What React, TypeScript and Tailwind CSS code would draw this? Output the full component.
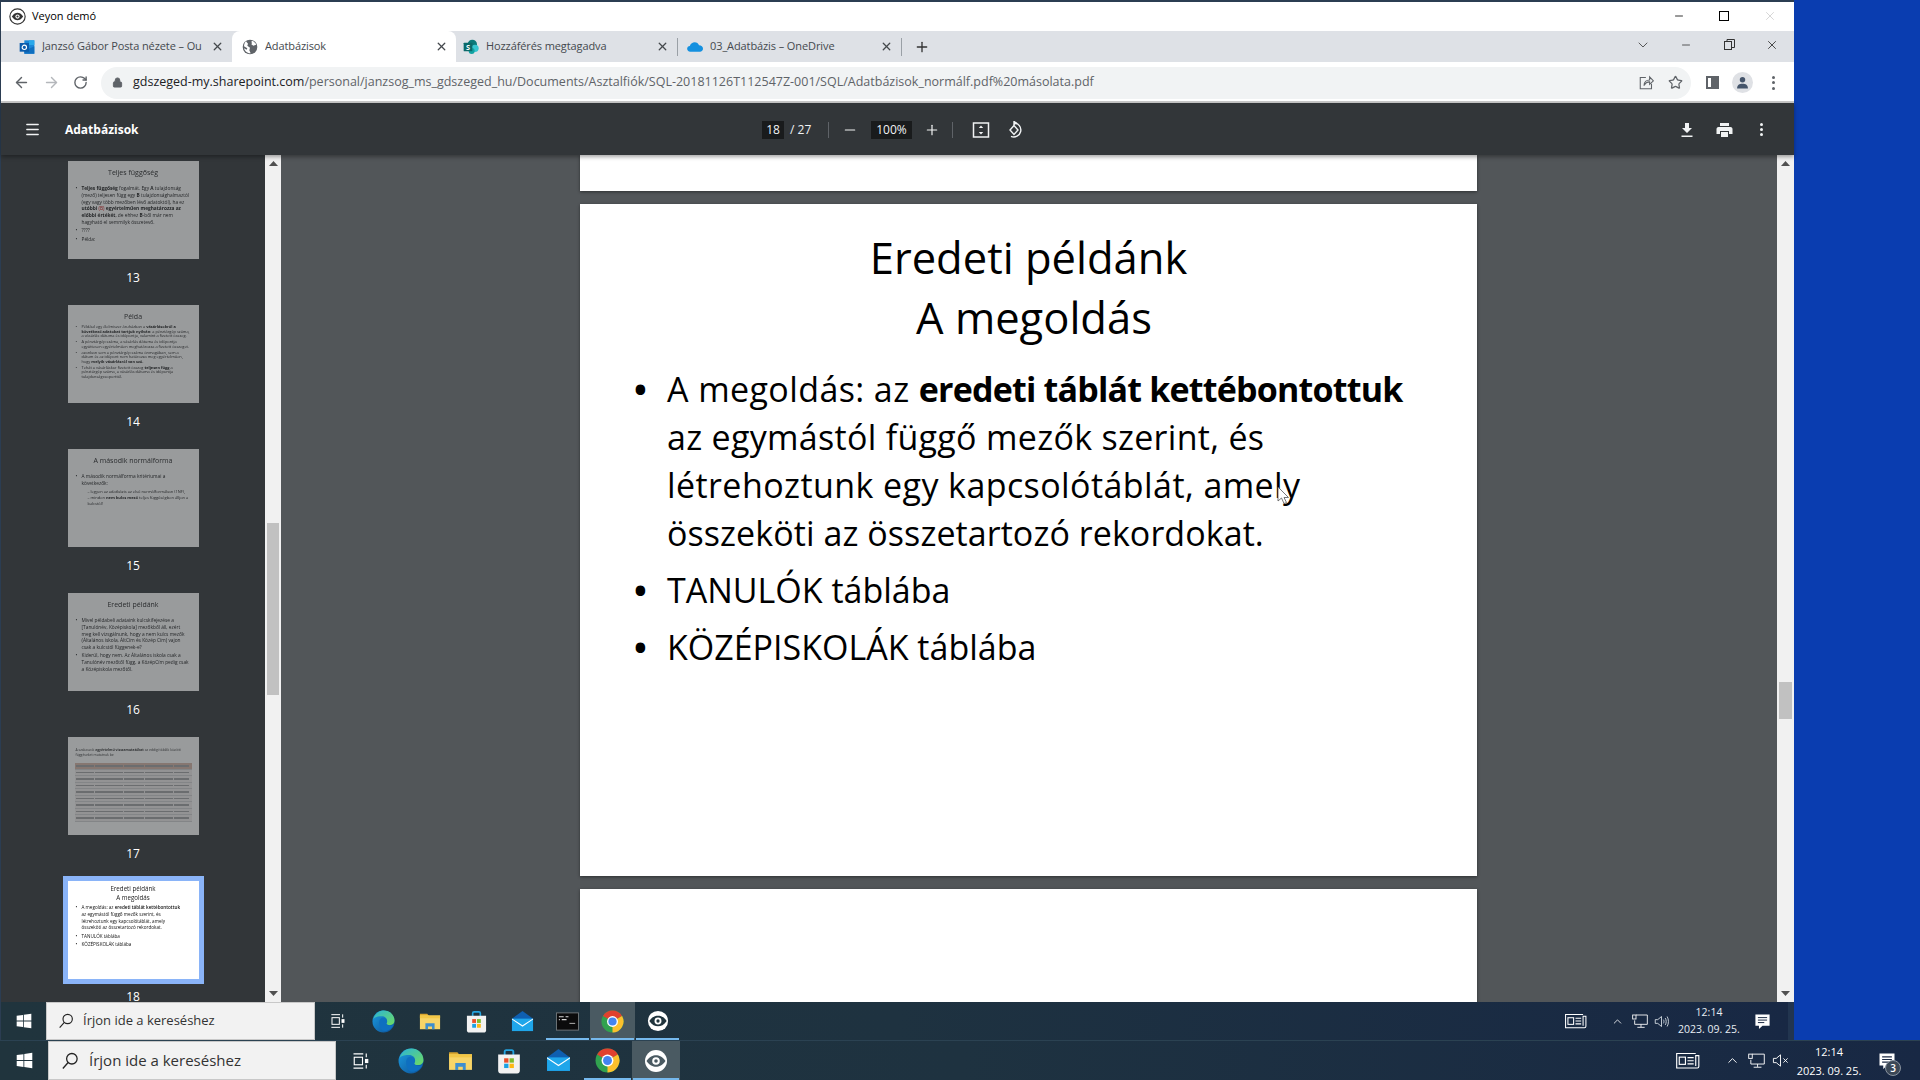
import React from "react";
import { ArrowLeft, ArrowRight, RotateCw, Star, X, Plus, Minus, ChevronDown, ChevronUp, Menu, Lock } from "lucide-react";

const Veyon = ({ s = 24, fg = "#fff", bg = "#1f3440" }: { s?: number; fg?: string; bg?: string }) => (
  <svg width={s} height={s} viewBox="0 0 24 24">
    <circle cx="12" cy="12" r="11" fill={fg} />
    <path d="M2.500 12c3-4.400 6.300-5.800 9.500-5.800s6.500 1.400 9.500 5.800c-3 4.400-6.300 5.800-9.500 5.800S5.500 16.400 2.500 12z" fill={bg} />
    <circle cx="12" cy="12" r="3.800" fill={fg} />
    <circle cx="12" cy="12" r="1.800" fill={bg} />
  </svg>
);
const VeyonSmall = () => (
  <svg width="17" height="17" viewBox="0 0 24 24">
    <circle cx="12" cy="12" r="10.800" fill="#fff" stroke="#333" strokeWidth="1.600" />
    <path d="M4 12c2.600-4 5.400-5.400 8-5.400s5.400 1.400 8 5.400c-2.600 4-5.400 5.400-8 5.400S6.600 16 4 12z" fill="#333" />
    <circle cx="12" cy="12" r="3" fill="#fff" />
    <circle cx="12" cy="12" r="1.500" fill="#333" />
  </svg>
);
const WinLogo = ({ s }: { s: number }) => (
  <svg width={s} height={s} viewBox="0 0 24 24" fill="#fff">
    <path d="M1 4.300 10.500 3v8.400H1zM11.700 2.800 23 1.200v10.200H11.700zM1 12.600h9.500V21L1 19.700zM11.700 12.600H23v10.200l-11.300-1.600z" />
  </svg>
);
const SearchGlass = ({ s }: { s: number }) => (
  <svg width={s} height={s} viewBox="0 0 24 24" fill="none" stroke="#222" strokeWidth="1.700">
    <circle cx="14.500" cy="9" r="7" />
    <path d="M9.500 14 2.500 22" />
  </svg>
);
const TaskView = ({ s }: { s: number }) => (
  <svg width={s} height={s} viewBox="0 0 24 24" fill="none" stroke="#fff" strokeWidth="1.500">
    <path d="M2 2.500h13M2 21.500h13" />
    <rect x="3" y="7" width="11" height="10" />
    <path d="M19 2v5M19 17v5" />
    <rect x="18" y="10" width="3" height="4" fill="#fff" />
  </svg>
);
const Edge = ({ s }: { s: number }) => (
  <svg width={s} height={s} viewBox="0 0 24 24">
    <defs>
      <linearGradient id="edgeA" x1="0" y1="0" x2="1" y2="1">
        <stop offset="0" stopColor="#1b9de2" />
        <stop offset="1" stopColor="#0c4f96" />
      </linearGradient>
      <linearGradient id="edgeB" x1="0" y1="0" x2="1" y2="1">
        <stop offset="0" stopColor="#2bb3d8" />
        <stop offset="1" stopColor="#6fdc5f" />
      </linearGradient>
    </defs>
    <circle cx="12" cy="12" r="11.500" fill="url(#edgeA)" />
    <path d="M1.500 9C3.500 3.500 7.500.5 12.500.5c6 0 11 4.500 11 10.500 0 3-2.200 4.800-5 4.800-2 0-3.700-.7-3.700-1.600 0-.6 1-1 1-2.700 0-2.800-2.400-5-5.300-5-3.400 0-7 .5-9 2.500z" fill="url(#edgeB)" />
    <path d="M7.500 13c0-3 2-5 3.800-5 2.400 0 4.500 1.800 4.500 4 0 1-.7 1.500-.7 2.200 0 1.500 2.200 2.300 4.300 2.300 1 0 2-.2 3-.8-1.600 4-5.800 6.500-9.500 6.300-3.500-.2-5.400-5-5.400-9z" fill="#0e6fc0" />
  </svg>
);
const Explorer = ({ s }: { s: number }) => (
  <svg width={s} height={s} viewBox="0 0 24 24">
    <path d="M1 4h8l2 2.500H1z" fill="#d9a52e" />
    <rect x="1" y="6" width="22" height="15" fill="#f8d568" />
    <path d="M1 6h22v3H1z" fill="#f3c746" />
    <path d="M7 21v-6.500h10V21h-2.800v-3H9.800v3z" fill="#3f8fce" />
  </svg>
);
const Store = ({ s }: { s: number }) => (
  <svg width={s} height={s} viewBox="0 0 24 24">
    <path d="M8 7V3.500C8 2.500 8.800 2 9.500 2h5c.8 0 1.500.5 1.500 1.500V7" fill="none" stroke="#25a4e0" strokeWidth="1.700" />
    <path d="M2 6h20v15c0 1.500-1 2.500-2.500 2.500h-15C3 23.500 2 22.500 2 21z" fill="#f2f2f2" />
    <rect x="7.500" y="9.500" width="4" height="4" fill="#ea4f2a" />
    <rect x="12.500" y="9.500" width="4" height="4" fill="#7cbb2b" />
    <rect x="7.500" y="14.500" width="4" height="4" fill="#1ba2e4" />
    <rect x="12.500" y="14.500" width="4" height="4" fill="#fdb813" />
  </svg>
);
const Mail = ({ s }: { s: number }) => (
  <svg width={s} height={s} viewBox="0 0 24 24">
    <path d="M12 1 23 9v13H1V9z" fill="#0f5fb0" />
    <path d="M1 9h22v13H1z" fill="#1fa6ea" />
    <path d="M1 10l11 7.500L23 10V8.800L12 16 1 8.800z" fill="#fff" />
  </svg>
);
const Cmd = ({ s }: { s: number }) => (
  <svg width={s} height={s} viewBox="0 0 24 24">
    <rect x="0.500" y="3" width="23" height="18" fill="#0b0b0c" stroke="#6f7579" />
    <path d="M3 7h5M10 7h3M3 10h1M6 10h5" stroke="#d8d8d8" strokeWidth="1.200" />
    <path d="M14 14h6" stroke="#999" strokeWidth="1.200" />
  </svg>
);
const Chrome = ({ s }: { s: number }) => (
  <svg width={s} height={s} viewBox="0 0 24 24">
    <circle cx="12" cy="12" r="11.500" fill="#31a24f" />
    <path d="M12 12 2.040 6.250A11.500 11.500 0 0 1 21.960 6.250z" fill="#e0412f" />
    <path d="M12 12 21.960 6.250A11.500 11.500 0 0 1 12 23.500z" fill="#fbc02d" />
    <circle cx="12" cy="12" r="5.700" fill="#fff" />
    <circle cx="12" cy="12" r="4.300" fill="#4484f0" />
  </svg>
);
const News = ({ s }: { s: number }) => (
  <svg width={s} height={s * 0.7} viewBox="0 0 24 17" fill="none" stroke="#fff" strokeWidth="1.100">
    <path d="M20 1.500H1.500v14H21.500c1 0 1.500-.6 1.500-1.500V3.500H20v10" />
    <rect x="4" y="5" width="6" height="7" />
    <path d="M12 5.500h6M12 8.500h6M12 11.500h6" />
  </svg>
);
const NetIcon = ({ s }: { s: number }) => (
  <svg width={s} height={s} viewBox="0 0 24 24" fill="none" stroke="#fff" strokeWidth="1.300">
    <path d="M6 3h17v14H4v-6" />
    <rect x="1" y="3" width="5" height="6" />
    <path d="M13.500 17v4M8 21.500h11" />
  </svg>
);
const VolOn = ({ s }: { s: number }) => (
  <svg width={s} height={s} viewBox="0 0 24 24" fill="none" stroke="#e8eef3" strokeWidth="1.300">
    <path d="M2 9v6h4l6 5V4L6 9z" />
    <path d="M15 9c1.200 1.800 1.200 4.200 0 6M18 6.500c2 3.200 2 7.800 0 11M21 4c2.800 4.700 2.800 11.300 0 16" />
  </svg>
);
const VolMute = ({ s }: { s: number }) => (
  <svg width={s} height={s} viewBox="0 0 24 24" fill="none" stroke="#fff" strokeWidth="1.300">
    <path d="M2 9v6h4l6 5V4L6 9z" />
    <path d="M16 9l6 6M22 9l-6 6" />
  </svg>
);
const Note = ({ s }: { s: number }) => (
  <svg width={s} height={s} viewBox="0 0 24 24">
    <path d="M2 2h20v16H12l-5 4.500V18H2z" fill="#fff" />
    <path d="M5.500 6.500h13M5.500 10h13M5.500 13.500h9" stroke="#1c2a44" strokeWidth="1.400" />
  </svg>
);

const Outlook = () => (
  <svg width="16" height="16" viewBox="0 0 24 24">
    <rect x="8" y="2" width="15" height="20" fill="#1a88d8" />
    <rect x="15" y="2" width="8" height="7" fill="#29a8ea" />
    <path d="M23 11v11H8v-4z" fill="#0f6fc0" />
    <rect x="1" y="6" width="14" height="13" fill="#0b5cab" />
    <circle cx="8" cy="12.500" r="3.300" fill="none" stroke="#fff" strokeWidth="1.700" />
  </svg>
);
const Globe = () => (
  <svg width="16" height="16" viewBox="0 0 24 24">
    <circle cx="12" cy="12" r="11" fill="#5f6368" />
    <path d="M6 3.500 9 7l-1 3 4 3-1 4 2 4.500C8 22 4 18 3 14l4 2 1-2-5-3c.2-3 1-6 3-7.500zM15 2.500c3 1 5.500 3.500 6.300 6L17 10l-3-2 1-2-1-1.500z" fill="#fff" />
  </svg>
);
const SharePoint = () => (
  <svg width="16" height="16" viewBox="0 0 24 24">
    <circle cx="14" cy="8" r="7" fill="#0b7a7a" />
    <circle cx="18" cy="14" r="5.500" fill="#37c6d0" />
    <circle cx="13" cy="18" r="4.500" fill="#13a3a3" />
    <rect x="1" y="5.500" width="13" height="13" rx="1" fill="#0b6a6a" />
    <text x="7.500" y="16" textAnchor="middle" fontSize="11" fontWeight="700" fill="#fff" fontFamily="Open Sans">S</text>
  </svg>
);
const OneDrive = () => (
  <svg width="16" height="16" viewBox="0 0 24 16">
    <path d="M5 15c-3 0-4.800-2-4.800-4.300 0-2.300 1.800-4 4-4.200C5.500 3 8.500 1 11.500 1c3.200 0 5.500 2 6.500 4.500 3.500 0 6 2.300 6 5.200 0 2.500-2 4.300-4.500 4.300z" fill="#1490df" />
  </svg>
);

const Tab = ({ icon, title, w, active, sep }: { icon: React.ReactNode; title: string; w: string; active?: boolean; sep?: boolean }) => (
  <div className={`${w} h-[31px] flex items-center relative shrink-0 ${active ? "bg-white rounded-t-[8px] text-[#3c4043]" : "text-[#45494e]"}`}>
    <span className="w-[23px] shrink-0 flex">{icon}</span>
    <span className="whitespace-nowrap text-[11px] tracking-[-0.1px] overflow-hidden flex-1">{title}</span>
    <X className="w-[13px] h-[13px] mx-[8px] shrink-0 text-[#44484c]" strokeWidth={2.4} />
    {sep && <span className="w-px h-[18px] bg-[#9aa0a6] shrink-0" />}
  </div>
);

const Slot = ({ w, active, running, children }: { w: string; active?: boolean; running?: boolean; children: React.ReactNode }) => (
  <div className={`${w} h-full flex items-center justify-center relative shrink-0 ${active ? "bg-[#4a5a62]" : ""}`}>
    {children}
    {running && <span className="absolute bottom-0 left-[1px] right-[1px] h-[2px] bg-[#76b9ed]" />}
  </div>
);

const Thumb = ({ n, children, current }: { n: number; children: React.ReactNode; current?: boolean }) => (
  <div className="h-[144px] shrink-0 flex flex-col items-center">
    <div className={`w-[131px] h-[98px] shrink-0 bg-white overflow-hidden text-[#111] ${current ? "outline-[5px] outline-[#8ab4f8]" : "opacity-50"}`}>
      <div className="blur-[0.4px] px-[8px] pt-[4px]">{children}</div>
    </div>
    <div className={`text-[12px] leading-[16px] text-white ${current ? "mt-[10px]" : "mt-[11px]"}`}>{n}</div>
  </div>
);
const TT = ({ children, wide }: { children: React.ReactNode; wide?: boolean }) => (
  <div className={`text-[7px] leading-[9px] text-center pt-[3px] text-[#222] ${wide ? "mb-[8px]" : "mb-[4px]"}`}>{children}</div>
);
const BL = ({ children, cls = "text-[4.400px] leading-[6px]" }: { children: React.ReactNode; cls?: string }) => (
  <div className={`flex ${cls} mb-[1.500px]`}>
    <span className="w-[6px] shrink-0">•</span>
    <span>{children}</span>
  </div>
);

const rows = [0, 1, 2, 3, 4, 5, 6, 7, 8];
const cols = ["w-[18px]", "w-[28px]", "w-[20px]", "w-[28px]", "w-[15px]"];

const ScrollArrow = ({ up }: { up?: boolean }) => (
  <svg width="9" height="5" viewBox="0 0 9 5" fill="#505050">
    {up ? <path d="M4.500 0 9 5H0z" /> : <path d="M4.500 5 9 0H0z" />}
  </svg>
);

const Bullet = ({ children, last }: { children: React.ReactNode; last?: boolean }) => (
  <div className={`flex whitespace-nowrap ${last ? "" : "mb-[9px]"}`}>
    <span className="w-[33px] shrink-0 font-bold">•</span>
    <div>{children}</div>
  </div>
);

export default function App() {
  return (
    <div className="w-[1920px] h-[1080px] overflow-hidden flex flex-col bg-[#0a3db0] [font-family:'Open_Sans','Noto_Sans',sans-serif]">
      <div className="flex h-[1040px] shrink-0">
        <div className="w-[1794px] h-full flex flex-col shrink-0 border-t-2 border-l border-[#2b3d52] bg-white">
          {/* title bar */}
          <div className="h-[29px] shrink-0 flex items-center bg-white">
            <span className="ml-[8px] mr-[6px] flex"><VeyonSmall /></span>
            <span className="text-[11px] text-black">Veyon demó</span>
            <div className="ml-auto flex items-center text-black mb-[2px]">
              <Minus className="w-[12px] h-[12px] mr-[34px]" strokeWidth={1.6} />
              <span className="w-[10px] h-[10px] border border-black mr-[34px]" />
              <X className="w-[14px] h-[14px] mr-[17px] text-[#c4c4c4]" strokeWidth={1.2} />
            </div>
          </div>
          {/* tabs */}
          <div className="h-[31px] shrink-0 flex items-center bg-[#dee1e6] pr-[16px]">
            <div className="w-[18px] shrink-0" />
            <Tab icon={<Outlook />} title="Janzsó Gábor Posta nézete – Ou" w="w-[213px]" />
            <div className="w-[224px] shrink-0 bg-white rounded-t-[8px] pl-[10px]">
              <Tab icon={<Globe />} title="Adatbázisok" w="w-[214px]" />
            </div>
            <div className="w-[7px] shrink-0" />
            <Tab icon={<SharePoint />} title="Hozzáférés megtagadva" w="w-[215px]" sep />
            <div className="w-[9px] shrink-0" />
            <Tab icon={<OneDrive />} title="03_Adatbázis – OneDrive" w="w-[215px]" sep />
            <Plus className="ml-[12px] w-[16px] h-[16px] text-[#333]" strokeWidth={2} />
            <div className="ml-auto flex items-center text-[#333] mb-[4px]">
              <ChevronDown className="w-[16px] h-[16px] mr-[29px]" strokeWidth={1.2} />
              <Minus className="w-[12px] h-[12px] mr-[32px]" strokeWidth={1.6} />
              <svg width="11" height="11" viewBox="0 0 11 11" fill="none" stroke="#333" className="mr-[30px]">
                <rect x="0.500" y="2.500" width="7" height="8" />
                <path d="M3 2.500V.5h7.500v8H8" />
              </svg>
              <X className="w-[14px] h-[14px] mr-[-1px]" strokeWidth={1.5} />
            </div>
          </div>
          {/* address bar */}
          <div className="h-[41px] shrink-0 flex items-center bg-white border-b-2 border-[#c9c9c9] text-[#5f6368] pt-[2px]">
            <ArrowLeft className="ml-[12px] w-[17px] h-[17px] text-[#5f6368]" strokeWidth={2} />
            <ArrowRight className="ml-[13px] w-[17px] h-[17px] text-[#b4b7bb]" strokeWidth={2} />
            <RotateCw className="ml-[13px] w-[15px] h-[15px] text-[#5f6368]" strokeWidth={2.2} />
            <div className="ml-[13px] w-[1590px] h-[32px] rounded-full bg-[#f1f3f4] flex items-center pl-[11px] shrink-0">
              <Lock className="w-[11px] h-[11px] text-[#5f6368] fill-[#5f6368]" strokeWidth={2} />
              <span className="ml-[10px] text-[12.500px] whitespace-nowrap text-[#5f6368]">
                <span className="text-[#202124]">gdszeged-my.sharepoint.com</span>/personal/janzsog_ms_gdszeged_hu/Documents/Asztalfiók/SQL-20181126T112547Z-001/SQL/Adatbázisok_normálf.pdf%20másolata.pdf
              </span>
              <div className="ml-auto flex items-center">
                <svg width="15" height="15" viewBox="0 0 24 24" fill="none" stroke="#5f6368" strokeWidth="1.700" className="mr-[14px]">
                  <path d="M11 4H2v18h18v-8" />
                  <path d="M8 17c0-6 4-9 9-9V3l6 6.500L17 15v-4c-4 0-7 2-9 6z" />
                </svg>
                <Star className="w-[15px] h-[15px] mr-[8px] text-[#5f6368]" strokeWidth={2} />
              </div>
            </div>
            <div className="ml-[15px] w-[13px] h-[13px] border-[2px] border-[#5f6368] flex justify-end shrink-0">
              <span className="w-[6px] bg-[#5f6368]" />
            </div>
            <div className="ml-[13px] w-[21px] h-[21px] rounded-full bg-[#dfe1e5] flex items-center justify-center shrink-0">
              <svg width="13" height="13" viewBox="0 0 24 24" fill="#44546a">
                <circle cx="12" cy="7" r="5" />
                <path d="M2 23c0-6 4-8.500 10-8.500S22 17 22 23z" />
              </svg>
            </div>
            <div className="ml-[19px] flex flex-col gap-[2.500px] shrink-0">
              <span className="w-[3px] h-[3px] rounded-full bg-[#5f6368]" />
              <span className="w-[3px] h-[3px] rounded-full bg-[#5f6368]" />
              <span className="w-[3px] h-[3px] rounded-full bg-[#5f6368]" />
            </div>
          </div>
          {/* pdf toolbar */}
          <div className="h-[52px] shrink-0 flex items-center bg-[#323639] text-[#f1f3f4] relative z-10 shadow-[0_2px_4px_rgba(0,0,0,0.35)] pt-[1px]">
            <Menu className="ml-[23px] w-[17px] h-[17px]" strokeWidth={2} />
            <span className="ml-[24px] text-[12px] font-bold text-white w-[697px] shrink-0">Adatbázisok</span>
            <span className="w-[22px] h-[18px] bg-[#191b1c] text-[12px] leading-[18px] text-center shrink-0">18</span>
            <span className="ml-[6px] text-[12px] w-[38px] shrink-0">/ 27</span>
            <span className="w-px h-[16px] bg-[#5f6368] shrink-0" />
            <Minus className="ml-[13px] w-[16px] h-[16px] shrink-0" strokeWidth={1.800} />
            <span className="ml-[13px] w-[41px] h-[18px] bg-[#191b1c] text-[12px] leading-[18px] text-center shrink-0">100%</span>
            <Plus className="ml-[12px] w-[16px] h-[16px] shrink-0" strokeWidth={1.800} />
            <span className="ml-[12px] w-px h-[16px] bg-[#5f6368] shrink-0" />
            <svg width="18" height="18" viewBox="0 0 18 18" fill="none" stroke="#f1f3f4" strokeWidth="1.500" className="ml-[19px] shrink-0">
              <rect x="1.500" y="2" width="15" height="14" />
              <path d="M9 4.500 6.800 7h4.400zM9 13.500 6.800 11h4.400z" fill="#f1f3f4" stroke="none" />
            </svg>
            <svg width="18" height="18" viewBox="0 0 18 18" fill="none" stroke="#f1f3f4" strokeWidth="1.400" className="ml-[16px] shrink-0">
              <path d="M8 4.500 4 9l4 4.500L12 9z" />
              <path d="M8 2a7 7 0 1 1-3 13.400" />
              <path d="M8 .5v3l2.200-1.500z" fill="#f1f3f4" />
            </svg>
            <div className="ml-auto flex items-center">
              <svg width="14" height="16" viewBox="0 0 14 16" fill="#f1f3f4" className="mr-[22px]">
                <path d="M5 1h4v5h3L7 11 2 6h3z" />
                <rect x="1.500" y="13.500" width="11" height="1.500" />
              </svg>
              <svg width="17" height="16" viewBox="0 0 17 16" fill="#f1f3f4" className="mr-[27px]">
                <path d="M4 1h9v3H4zM2.500 5h12c1 0 2 .8 2 2v5H13V9H4v3H.5V7c0-1.200 1-2 2-2z" />
                <rect x="5" y="10" width="7" height="5" />
              </svg>
              <div className="mr-[31px] flex flex-col gap-[2px]">
                <span className="w-[3px] h-[3px] rounded-full bg-[#f1f3f4]" />
                <span className="w-[3px] h-[3px] rounded-full bg-[#f1f3f4]" />
                <span className="w-[3px] h-[3px] rounded-full bg-[#f1f3f4]" />
              </div>
            </div>
          </div>
          {/* viewer */}
          <div className="h-[847px] shrink-0 flex overflow-hidden">
            <div className="w-[264px] shrink-0 bg-[#323639] flex flex-col pt-[6px] overflow-hidden">
              <Thumb n={13}>
                <TT wide>Teljes függőség</TT>
                <BL cls="text-[4.800px] leading-[6.800px]"><b>Teljes függőség</b> fogalmát. Egy <b>A</b> tulajdonság (mező) teljesen függ egy <b>B</b> tulajdonsághalmaztól (egy vagy több mezőben lévő adatoktól), ha ez <b>utóbbi</b> <span className="text-[#c00]">(B)</span> <b>egyértelműen meghatározza az előbbi értékét</b>, de ehhez <b>B</b>-ből már nem hagyható el semmilyk összetevő.</BL>
                <BL cls="text-[4.800px] leading-[6.800px]">????</BL>
                <BL cls="text-[4.800px] leading-[6.800px]">Példa:</BL>
              </Thumb>
              <Thumb n={14}>
                <TT>Példa</TT>
                <BL cls="text-[3.900px] leading-[4.500px]">Például egy élelmiszer áruházban a <b>vásárlásokról a következő adatokat tartjuk nyilván</b>: a pénztárgép száma, a vásárlás dátuma és időpontja, valamint a fizetett összeg.</BL>
                <BL cls="text-[3.900px] leading-[4.500px]">A pénztárgép száma, a vásárlás dátuma és időpontja együttesen egyértelműen meghatározza a fizetett összeget.</BL>
                <BL cls="text-[3.900px] leading-[4.500px]">azonban sem a pénztárgép száma önmagában, sem a dátum és az időpont nem határozza meg egyértelműen, hogy <b>melyik vásárlásról van szó.</b></BL>
                <BL cls="text-[3.900px] leading-[4.500px]">Tehát a vásárláskor fizetett összeg <b>teljesen függ</b> a pénztárgép száma, a vásárlás dátuma és időpontja tulajdonságcsoporttól.</BL>
              </Thumb>
              <Thumb n={15}>
                <TT wide>A második normálforma</TT>
                <BL cls="text-[4.800px] leading-[7px]">A második normálforma kritériumai a következők:</BL>
                <div className="pl-[12px] text-[4px] leading-[6px]">– legyen az adatbázis az első normálformában (1NF),</div>
                <div className="pl-[12px] text-[4px] leading-[6px]">– minden <b>nem kulcs mező</b> teljes függőségben álljon a kulcstól!</div>
              </Thumb>
              <Thumb n={16}>
                <TT wide>Eredeti példánk</TT>
                <BL cls="text-[4.800px] leading-[6.800px]">Mivel példabeli adataink kulcskifejezése a [Tanulónév, Középiskola] mezőkből áll, ezért meg kell vizsgálnunk, hogy a nem kulcs mezők (Általános iskola, ÁltCím és Közép Cím) vajon csak a kulcstól függenek-e?</BL>
                <BL cls="text-[4.800px] leading-[6.800px]">Kiderül, hogy nem. Az Általános iskola csak a Tanulónév mezőtől függ, a KözépCím pedig csak a Középiskola mezőtől.</BL>
              </Thumb>
              <Thumb n={17}>
                <div className="pt-[6px] text-[3.400px] leading-[5px] text-[#333]">A szakaszok <b>egyértelmű visszamutatókat</b> az eddigi táblák közötti függéseket mutatnak be</div>
                <div className="mt-[6px] -mx-[1px] bg-[#e9d7cf]">
                  {rows.map((r) => (
                    <div key={r} className={`flex gap-[1px] h-[6.500px] items-center px-[1px] border-b border-[#d4d4d4] ${r === 0 ? "bg-[#d9b8aa]" : "bg-[#f4f0ee]"}`}>
                      {cols.map((c, i) => (
                        <span key={i} className={`${c} h-[1.500px] bg-[#a5a5a5] shrink-0`} />
                      ))}
                    </div>
                  ))}
                </div>
              </Thumb>
              <Thumb n={18} current>
                <div className="text-[6.200px] leading-[8.500px] text-center text-[#222] mb-[2px]">Eredeti példánk<br />A megoldás</div>
                <div className="whitespace-nowrap">
                  <BL cls="text-[4.600px] leading-[6.800px]">A megoldás: az <b className="font-semibold">eredeti táblát kettébontottuk</b><br />az egymástól függő mezők szerint, és<br />létrehoztunk egy kapcsolótáblát, amely<br />összeköti az összetartozó rekordokat.</BL>
                  <BL cls="text-[4.600px] leading-[6.800px]">TANULÓK táblába</BL>
                  <BL cls="text-[4.600px] leading-[6.800px]">KÖZÉPISKOLÁK táblába</BL>
                </div>
              </Thumb>
            </div>
            {/* thumb scrollbar */}
            <div className="w-[16px] shrink-0 bg-[#f1f1f1] flex flex-col items-center">
              <div className="h-[16px] pt-[6px] flex shrink-0"><ScrollArrow up /></div>
              <div className="h-[352px] shrink-0" />
              <div className="w-[12px] h-[172px] bg-[#c1c1c1] shrink-0" />
              <div className="flex-1" />
              <div className="h-[16px] pt-[5px] flex shrink-0"><ScrollArrow /></div>
            </div>
            {/* pages */}
            <div className="flex-1 bg-[#525659] flex flex-col items-center gap-[13px] overflow-hidden pr-[1px]">
              <div className="w-[897px] h-[36px] bg-white shrink-0 shadow-[0_1px_3px_rgba(0,0,0,0.45)]" />
              <div className="w-[897px] h-[672px] bg-white shrink-0 shadow-[0_1px_3px_rgba(0,0,0,0.45)] text-black relative">
                <div className="pt-[24px] text-[43.500px] leading-[60px] text-center">
                  Eredeti példánk
                  <br />
                  <span className="pl-[11px]">A megoldás</span>
                </div>
                <div className="mt-[17px] pl-[54px] pr-[50px] text-[34px] leading-[48px]">
                  <Bullet>
                    <div><span className="tracking-[0.4px]">A megoldás: az </span><b className="font-bold tracking-[-0.8px]">eredeti táblát kettébontottuk</b></div>
                    <div className="tracking-[0.3px]">az egymástól függő mezők szerint, és</div>
                    <div className="tracking-[0.42px]">létrehoztunk egy kapcsolótáblát, amely</div>
                    <div className="tracking-[0.07px]">összeköti az összetartozó rekordokat.</div>
                  </Bullet>
                  <Bullet>TANULÓK táblába</Bullet>
                  <Bullet last>KÖZÉPISKOLÁK táblába</Bullet>
                </div>
                <svg width="12" height="19" viewBox="0 0 12 19" className="absolute left-[697px] top-[282px]">
                  <path d="M1 1v14l3.500-3 2.500 5.500 2.500-1L7 11.500h4.500z" fill="#fff" stroke="#555" strokeWidth="0.800" />
                </svg>
              </div>
              <div className="w-[897px] h-[120px] bg-white shrink-0 shadow-[0_1px_3px_rgba(0,0,0,0.45)]" />
            </div>
            {/* main scrollbar */}
            <div className="w-[17px] shrink-0 bg-[#f1f1f1] flex flex-col items-center">
              <div className="h-[16px] pt-[6px] flex shrink-0"><ScrollArrow up /></div>
              <div className="h-[511px] shrink-0" />
              <div className="w-[13px] h-[37px] bg-[#c1c1c1] shrink-0" />
              <div className="flex-1" />
              <div className="h-[16px] pt-[5px] flex shrink-0"><ScrollArrow /></div>
            </div>
          </div>
          {/* inner taskbar */}
          <div className="h-[38px] shrink-0 flex items-center bg-gradient-to-r from-[#20343d] via-[#1e3240] to-[#182844] text-white border-r-[6px] border-[#22354f]">
            <div className="w-[45px] h-full flex items-center justify-center shrink-0"><WinLogo s={16} /></div>
            <div className="w-[269px] h-full bg-[#f2f2f2] flex items-center pl-[11px] shrink-0 border border-[#c8c8c8]">
              <SearchGlass s={16} />
              <span className="ml-[9px] text-[13px] text-[#333]">Írjon ide a kereséshez</span>
            </div>
            <Slot w="w-[45px]"><TaskView s={16} /></Slot>
            <Slot w="w-[47px]"><Edge s={23} /></Slot>
            <Slot w="w-[46px]"><Explorer s={22} /></Slot>
            <Slot w="w-[46px]"><Store s={23} /></Slot>
            <Slot w="w-[46px]"><Mail s={23} /></Slot>
            <Slot w="w-[45px]" running><Cmd s={23} /></Slot>
            <Slot w="w-[45px]" active running><Chrome s={23} /></Slot>
            <Slot w="w-[45px]" running><Veyon s={22} bg="#20343d" /></Slot>
            <div className="ml-auto flex items-center shrink-0">
              <News s={23} />
              <ChevronUp className="ml-[24px] w-[13px] h-[13px]" strokeWidth={1.500} />
              <span className="ml-[8px] flex"><NetIcon s={16} /></span>
              <span className="ml-[6px] flex"><VolOn s={15} /></span>
              <div className="ml-[5px] w-[70px] flex flex-col items-center text-[10.500px] leading-[17px] text-[#e8eef3] whitespace-nowrap">
                <span>12:14</span>
                <span>2023. 09. 25.</span>
              </div>
              <span className="ml-[10px] mr-[17px] flex"><Note s={17} /></span>
            </div>
          </div>
        </div>
        <div className="flex-1 bg-[#0a3db0]" />
      </div>
      {/* outer taskbar */}
      <div className="h-[40px] shrink-0 flex items-center bg-gradient-to-r from-[#20343d] via-[#1e3240] to-[#182844] text-white border-t border-[#2b4252]">
        <div className="w-[48px] h-full flex items-center justify-center shrink-0"><WinLogo s={17} /></div>
        <div className="w-[288px] h-full bg-[#f2f2f2] flex items-center pl-[12px] shrink-0 border border-[#c8c8c8]">
          <SearchGlass s={18} />
          <span className="ml-[10px] text-[15px] text-[#333]">Írjon ide a kereséshez</span>
        </div>
        <Slot w="w-[49px]"><TaskView s={18} /></Slot>
        <Slot w="w-[51px]"><Edge s={26} /></Slot>
        <Slot w="w-[49px]"><Explorer s={25} /></Slot>
        <Slot w="w-[48px]"><Store s={26} /></Slot>
        <Slot w="w-[50px]"><Mail s={25} /></Slot>
        <Slot w="w-[49px]" running><Chrome s={25} /></Slot>
        <Slot w="w-[48px]" active running><Veyon s={24} bg="#4a5a62" /></Slot>
        <div className="ml-auto flex items-center shrink-0">
          <News s={25} />
          <ChevronUp className="ml-[25px] w-[15px] h-[15px]" strokeWidth={1.500} />
          <span className="ml-[8px] flex"><NetIcon s={17} /></span>
          <span className="ml-[7px] flex"><VolMute s={17} /></span>
          <div className="ml-[5px] w-[70px] flex flex-col items-center text-[11px] leading-[19px] text-white whitespace-nowrap">
            <span>12:14</span>
            <span>2023. 09. 25.</span>
          </div>
          <span className="ml-[14px] mr-[24px] flex relative">
            <Note s={18} />
            <span className="absolute left-[7px] top-[8px] w-[16px] h-[16px] rounded-full bg-[#3b4756] border border-[#8a94a0] text-[10px] leading-[14px] text-center font-semibold">3</span>
          </span>
        </div>
      </div>
    </div>
  );
}
